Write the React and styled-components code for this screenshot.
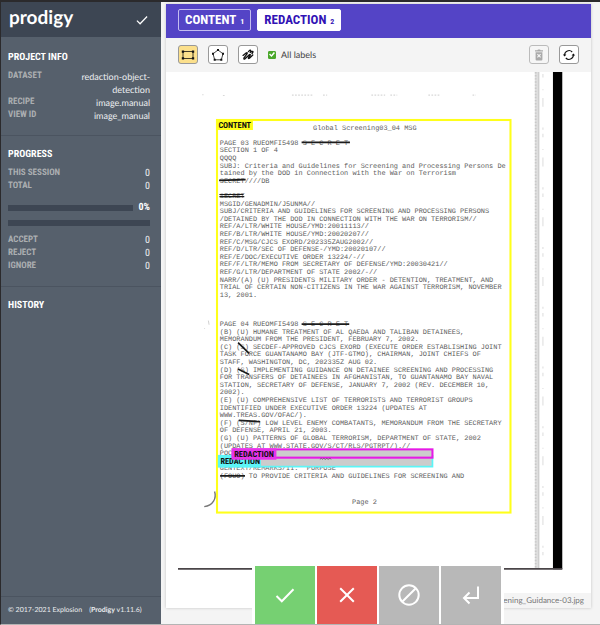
import React, { useState } from "react";
import styled, { createGlobalStyle } from "styled-components";

const condensed = `"Roboto Condensed", "Liberation Sans Narrow", Roboto, sans-serif`;
const body = `Lato, "Open Sans", sans-serif`;

const GlobalStyle = createGlobalStyle`
  *, *::before, *::after { box-sizing: border-box; }
  body {
    margin: 0;
    font-family: ${body};
    font-size: 9px;
    line-height: 13px;
    text-rendering: geometricPrecision;
    background: #f4f4f4;
  }
  button { font: inherit; cursor: pointer; padding: 0; }
`;

const Page = styled.div`
  display: flex;
  min-height: 100vh;
  border-top: 2px solid #2b2a2c;
  border-left: 1px solid #2b2a2c;
  border-bottom: 1px solid #b4b4b4;
`;

const Sidebar = styled.aside`
  flex: 0 0 160px;
  min-width: 0;
  display: flex;
  flex-direction: column;
  color: #eceef0;
  background: #56606c;
`;

const Brand = styled.header`
  display: flex;
  align-items: center;
  justify-content: space-between;
  height: 35px;
  padding: 0 13px 4px 8px;
  background: #3d4653;
`;

const Logo = styled.h1`
  margin: 0;
  font-size: 19px;
  line-height: 24px;
  font-weight: 700;
  color: #fff;
`;

const SaveButton = styled.button`
  display: flex;
  margin-top: 4px;
  border: 0;
  color: #fff;
  background: none;
`;

const Sections = styled.div`
  flex: 1;
  padding-top: 2px;
`;

const Section = styled.section`
  padding: 12px 11px 13px 7px;
  border-bottom: ${(p) => (p.$last ? "0" : "1px solid #4b5460")};
`;

const Heading = styled.h2`
  margin: 0 0 6px;
  font: 700 10px/13px ${condensed};
  color: #fff;
`;

const Facts = styled.dl`
  margin: 0;
`;

const Fact = styled.div`
  display: flex;
  justify-content: space-between;
  dt {
    font: 700 9px/13px ${condensed};
    color: #abaeb1;
  }
  dd {
    width: 80px;
    margin: 0;
    text-align: right;
    font-family: ${(p) => (p.$count ? condensed : body)};
    font-size: ${(p) => (p.$count ? "10px" : "9px")};
  }
`;

const Meter = styled.div`
  display: flex;
  align-items: center;
  gap: 6px;
  height: ${(p) => (p.$spaced ? "13px" : "6px")};
  margin: ${(p) => (p.$spaced ? "8px 0 6px" : "0 0 8px")};
  font: 700 10px/13px ${condensed};
  color: #fff;
`;

const Track = styled.div`
  flex: 1;
  height: 6px;
  background: #3d4653;
`;

const Legal = styled.footer`
  display: flex;
  gap: 7px;
  padding: 7px;
  border-top: 1px solid #4b5460;
  font-size: 7px;
  white-space: nowrap;
  a { color: inherit; text-decoration: none; }
`;

const Main = styled.main`
  position: relative;
  flex: 1;
  min-width: 0;
  padding: 2px 9px 16px 5px;
  background: #f4f4f4;
`;

const Card = styled.article`
  background: #fff;
  box-shadow: 0 0 3px rgba(0, 0, 0, 0.2);
`;

const Labels = styled.div`
  display: flex;
  gap: 6px;
  padding: 5px 12px 7px;
  background: #5444c6;
`;

const LabelButton = styled.button`
  display: flex;
  align-items: baseline;
  gap: 4px;
  height: 22px;
  padding: 0 6px;
  border: 1px solid ${(p) => (p.$active ? "#fff" : "#c4bdf0")};
  border-radius: 2px;
  font: 700 13px/20px ${condensed};
  color: ${(p) => (p.$active ? "#3213b5" : "#fff")};
  background: ${(p) => (p.$active ? "#fff" : "transparent")};
  small { font-size: 8px; }
`;

const Toolbar = styled.div`
  display: flex;
  align-items: center;
  gap: 10px;
  padding: 7px 12px 8px;
  background: #f4f4f4;
`;

const Tool = styled.button`
  display: flex;
  align-items: center;
  justify-content: center;
  width: 20px;
  height: 19px;
  border: 1px solid #999;
  border-radius: 3px;
  color: #111;
  background: ${(p) => (p.$active ? "#fce08c" : "#fff")};
  &:disabled { color: #aaa; border-color: #bbb; background: #f6f6f6; }
`;

const Toggle = styled.label`
  display: flex;
  align-items: center;
  gap: 5px;
  margin-right: auto;
  color: #444;
`;

const Tick = styled.input`
  appearance: none;
  display: grid;
  place-items: center;
  width: 8px;
  height: 8px;
  margin: 0;
  border-radius: 1px;
  border: 1px solid #4ba82c;
  background: #fff;
  &:checked { background: #4ba82c; }
  &:checked::before {
    content: "";
    width: 6px;
    height: 6px;
    background: #fff;
    clip-path: polygon(0 50%, 18% 34%, 40% 58%, 80% 10%, 100% 26%, 42% 92%);
  }
`;

const Figure = styled.figure`
  margin: 0;
  padding-left: 12px;
`;

const Scan = styled.svg`
  display: block;
  width: calc(100% - 27px);
  height: auto;
`;

const Caption = styled.figcaption`
  width: fit-content;
  margin: 23px 0 0 auto;
  padding: 1px 7px;
  font-size: 8px;
  color: #777;
  background: #f4f4f4;
`;

const Actions = styled.div`
  position: absolute;
  left: 0;
  right: 6px;
  bottom: 0;
  display: flex;
  justify-content: center;
`;

const ActionGroup = styled.div`
  display: flex;
  gap: 2px;
  padding: 0 3px;
  background: #fff;
`;

const Action = styled.button`
  display: flex;
  align-items: center;
  justify-content: center;
  width: 60px;
  height: 58px;
  border: 0;
  color: #fff;
  background: ${(p) => p.$color};
`;

const glyph = { fill: "none", stroke: "currentColor" };

const CheckIcon = ({ size = 20, weight = 2 }) => (
  <svg width={size} height={size} viewBox="0 0 20 20" {...glyph} strokeWidth={weight}>
    <path d="M1.5 11 L6.8 16.3 L18.5 4.2" />
  </svg>
);
const CrossIcon = () => (
  <svg width="20" height="20" viewBox="0 0 20 20" {...glyph} strokeWidth="2">
    <path d="M3.2 3.2 L16.8 16.8 M16.8 3.2 L3.2 16.8" />
  </svg>
);
const BanIcon = () => (
  <svg width="24" height="24" viewBox="0 0 24 24" {...glyph} strokeWidth="2">
    <circle cx="12" cy="12" r="9.7" />
    <path d="M18.8 5.2 L5.2 18.8" />
  </svg>
);
const ReturnIcon = () => (
  <svg width="20" height="20" viewBox="0 0 20 20" {...glyph} strokeWidth="2">
    <path d="M17 1.5 V13 H3 M8.5 7.5 L3 13 L8.5 18.5" />
  </svg>
);
const RectIcon = () => (
  <svg width="14" height="12" viewBox="0 0 14 12" {...glyph}>
    <path d="M2 2.5 H12 V9.5 H2 Z" strokeWidth="0.8" />
    <path d="M0.8 1.4h2.3v2.3H0.8z M10.9 1.4h2.3v2.3h-2.3z M0.8 8.3h2.3v2.3H0.8z M10.9 8.3h2.3v2.3h-2.3z" fill="currentColor" stroke="none" />
  </svg>
);
const PolyIcon = () => (
  <svg width="14" height="14" viewBox="0 0 14 14" {...glyph}>
    <path d="M7 2 L12 5.8 L10.3 11.8 H3.7 L2 5.8 Z" strokeWidth="0.8" />
    <path d="M6 1h2v2H6z M11 4.8h2v2h-2z M9.3 10.8h2v2h-2z M2.7 10.8h2v2h-2z M1 4.8h2v2H1z" fill="currentColor" stroke="none" />
  </svg>
);
const FreehandIcon = () => (
  <svg width="14" height="14" viewBox="0 0 14 14" {...glyph} strokeWidth="1.3" strokeLinecap="round" strokeLinejoin="round">
    <path d="M2 7.4 L5.4 4.8 Q6.8 4.2 6 5.8 L3 9.8 Q2.4 11.6 4 10.8 L8.6 6.6 Q9.8 6 9 7.6 L7.4 9.8 Q7.2 11 8.4 10.2 L11.8 7" />
    <path d="M7.4 3.6 L8.6 2.4 Q10 1.8 9.6 3.2 L9.2 4.4 L11 3.4 Q12.4 3 11.8 4.4 L11 5.6" />
  </svg>
);
const TrashIcon = () => (
  <svg width="12" height="12" viewBox="0 0 12 12">
    <path fill="currentColor" fillRule="evenodd" d="M2 1.2h2.4L5 .6h2l.6.6H10v1.2H2z M2.6 3.2h6.8v7.2q0 1-1 1H3.6q-1 0-1-1z M4 5.6 5.2 6.8 4 8l.8.8L6 7.6l1.2 1.2L8 8 6.8 6.8 8 5.6l-.8-.8L6 6 4.8 4.8z" />
  </svg>
);
const RefreshIcon = () => (
  <svg width="14" height="14" viewBox="0 0 14 14" {...glyph} strokeWidth="1.1">
    <path d="M2.6 7.5 V7 A4.4 4.4 0 0 1 10.2 4 M11.4 6.5 V7 A4.4 4.4 0 0 1 3.8 10" />
    <path d="M0.8 6.4 H4.4 L2.6 8.6 Z M9.6 7.6 H13.2 L11.4 5.4 Z" fill="currentColor" stroke="none" />
  </svg>
);

const firstPage = [
  "PAGE 03 RUEOMFI5498 S E C R E T",
  "SECTION 1 OF 4",
  "QQQQ",
  "SUBJ: Criteria and Guidelines for Screening and Processing Persons De",
  "tained by the DOD in Connection with the War on Terrorism",
  "SECRET////DB",
  "",
  "SECRET",
  "MSGID/GENADMIN/J5UNMA//",
  "SUBJ/CRITERIA AND GUIDELINES FOR SCREENING AND PROCESSING PERSONS",
  "/DETAINED BY THE DOD IN CONNECTION WITH THE WAR ON TERRORISM//",
  "REF/A/LTR/WHITE HOUSE/YMD:20011113//",
  "REF/B/LTR/WHITE HOUSE/YMD:20020207//",
  "REF/C/MSG/CJCS EXORD/202335ZAUG2002//",
  "REF/D/LTR/SEC OF DEFENSE-/YMD:20020107//",
  "REF/E/DOC/EXECUTIVE ORDER 13224/-//",
  "REF/F/LTR/MEMO FROM SECRETARY OF DEFENSE/YMD:20030421//",
  "REF/G/LTR/DEPARTMENT OF STATE 2002/-//",
  "NARR/(A) (U) PRESIDENTS MILITARY ORDER - DETENTION, TREATMENT, AND",
  "TRIAL OF CERTAIN NON-CITIZENS IN THE WAR AGAINST TERRORISM, NOVEMBER",
  "13, 2001.",
];

const secondPage = [
  "PAGE 04 RUEOMFI5498 S E C R E T",
  "(B) (U) HUMANE TREATMENT OF AL QAEDA AND TALIBAN DETAINEES,",
  "MEMORANDUM FROM THE PRESIDENT, FEBRUARY 7, 2002.",
  "(C) (S) SECDEF-APPROVED CJCS EXORD (EXECUTE ORDER ESTABLISHING JOINT",
  "TASK FORCE GUANTANAMO BAY (JTF-GTMO), CHAIRMAN, JOINT CHIEFS OF",
  "STAFF, WASHINGTON, DC, 202335Z AUG 02.",
  "(D) (S) IMPLEMENTING GUIDANCE ON DETAINEE SCREENING AND PROCESSING",
  "FOR TRANSFERS OF DETAINEES IN AFGHANISTAN, TO GUANTANAMO BAY NAVAL",
  "STATION, SECRETARY OF DEFENSE, JANUARY 7, 2002 (REV. DECEMBER 10,",
  "2002).",
  "(E) (U) COMPREHENSIVE LIST OF TERRORISTS AND TERRORIST GROUPS",
  "IDENTIFIED UNDER EXECUTIVE ORDER 13224 (UPDATES AT",
  "WWW.TREAS.GOV/OFAC/).",
  "(F) (S/NF) LOW LEVEL ENEMY COMBATANTS, MEMORANDUM FROM THE SECRETARY",
  "OF DEFENSE, APRIL 21, 2003.",
  "(G) (U) PATTERNS OF GLOBAL TERRORISM, DEPARTMENT OF STATE, 2002",
  "(UPDATES AT WWW.STATE.GOV/S/CT/RLS/PGTRPT/).//",
  "POC",
  "",
  "GENTEXT/REMARKS/II.  PURPOSE",
  "(FOUO) TO PROVIDE CRITERIA AND GUIDELINES FOR SCREENING AND",
];

const Typed = styled.text`
  font: 20px "Liberation Mono", monospace;
  white-space: pre;
  fill: #5c5c5c;
`;

const BoxLabel = styled.text`
  font: 700 24px ${condensed};
  fill: #111;
`;

const TypedLines = ({ lines, top }) =>
  lines.map((line, i) => (
    <Typed key={i} x="121" y={top + i * 22}>
      {line}
    </Typed>
  ));

const ScannedPage = () => (
  <Scan viewBox="0 0 1118 1442" role="img" aria-label="Scanned page">
    <path d="M1040 0V1438" stroke="#dedede" strokeWidth="13" />
    <path d="M1036 0V1438" stroke="#c8c8c8" strokeWidth="5" strokeDasharray="4 5" />
    <path d="M1045 0V1438" stroke="#bdbdbd" strokeWidth="2" />
    <path d="M1057 6V1430" stroke="#ddd" strokeWidth="3" strokeDasharray="10 34 3 22 26 60 6 12" />
    <path d="M1086 0H1113V1440H1086Z" fill="#000" />
    <path d="M0 1439H1113" stroke="#4a4548" strokeWidth="5" />
    <path d="M70 66h4m56 2h5m195-1h60m30 0h12m128 0h40m15 0h20m90 0h36m92 0h10" stroke="#d8d8d8" strokeWidth="3" strokeDasharray="5 4" />
    <Typed x="391" y="169">Global Screening03_04 MSG</Typed>
    <TypedLines lines={firstPage} top={211} />
    <TypedLines lines={secondPage} top={736} />
    <Typed x="504" y="1250">Page 2</Typed>
    <g fill="none" stroke="#1c1c1c" strokeWidth="5">
      <path d="M358 204H498 M358 730H496 M119 314L196 312" />
      <path d="M120 361H192 M120 355H190" strokeWidth="3" />
      <path d="M174 784L206 815 M174 860L206 876 M176 1009L238 1013 M122 1170H194" />
      <path d="M106 1215C112 1234 102 1256 76 1259" stroke="#777" strokeWidth="4" />
      <path d="M88 720L90 732 M76 742L78 744" stroke="#bbb" strokeWidth="2" />
    </g>
    <rect x="113" y="139" width="850" height="1137" fill="none" stroke="#ffff1a" strokeWidth="6" />
    <rect x="110" y="138" width="107" height="30" fill="#ffff1a" />
    <BoxLabel x="117" y="162">CONTENT</BoxLabel>
    <rect x="118" y="1112" width="619" height="31" fill="#ccc" stroke="#5cf5f7" strokeWidth="5" />
    <rect x="116" y="1109" width="124" height="36" fill="#5cf5f7" />
    <BoxLabel x="123" y="1136">REDACTION</BoxLabel>
    <rect x="158" y="1093" width="579" height="24" fill="#ccc" stroke="#e61ae6" strokeWidth="6" />
    <rect x="156" y="1090" width="129" height="33" fill="#e833ea" />
    <BoxLabel x="163" y="1116">REDACTION</BoxLabel>
    <path d="M411 1122l4-3 3 3 4-3 5 3 4-3 4 3 5-3 4 3" fill="none" stroke="#555" strokeWidth="2" />
  </Scan>
);

const info = [
  ["Dataset", "redaction-object-detection"],
  ["Recipe", "image.manual"],
  ["View ID", "image_manual"],
];

const FactList = ({ items, count }) => (
  <Facts>
    {items.map(([name, value]) => (
      <Fact key={name} $count={count}>
        <dt>{name.toUpperCase()}</dt>
        <dd>{value}</dd>
      </Fact>
    ))}
  </Facts>
);

export default function App() {
  const [label, setLabel] = useState("REDACTION");
  const [tool, setTool] = useState("Rectangle");
  const tools = [["Rectangle", RectIcon], ["Polygon", PolyIcon], ["Freehand", FreehandIcon]];
  return (
    <Page>
      <GlobalStyle />
      <Sidebar>
        <Brand>
          <Logo>prodigy</Logo>
          <SaveButton aria-label="Save"><CheckIcon size={12} weight={2} /></SaveButton>
        </Brand>
        <Sections>
          <Section>
            <Heading>PROJECT INFO</Heading>
            <FactList items={info} />
          </Section>
          <Section>
            <Heading>PROGRESS</Heading>
            <FactList count items={[["This session", 0], ["Total", 0]]} />
            <Meter $spaced><Track />0%</Meter>
            <Meter><Track /></Meter>
            <FactList count items={[["Accept", 0], ["Reject", 0], ["Ignore", 0]]} />
          </Section>
          <Section $last>
            <Heading>HISTORY</Heading>
          </Section>
        </Sections>
        <Legal>
          <a href="#explosion">© 2017-2021 Explosion</a>
          <span>(<b>Prodigy</b> v1.11.6)</span>
        </Legal>
      </Sidebar>
      <Main>
        <Card>
          <Labels>
            {["CONTENT", "REDACTION"].map((name, i) => (
              <LabelButton key={name} $active={label === name} aria-pressed={label === name} onClick={() => setLabel(name)}>
                {name}<small>{i + 1}</small>
              </LabelButton>
            ))}
          </Labels>
          <Toolbar>
            {tools.map(([name, Icon]) => (
              <Tool key={name} aria-label={name} $active={tool === name} onClick={() => setTool(name)}><Icon /></Tool>
            ))}
            <Toggle><Tick type="checkbox" defaultChecked />All labels</Toggle>
            <Tool disabled aria-label="Delete"><TrashIcon /></Tool>
            <Tool aria-label="Reset"><RefreshIcon /></Tool>
          </Toolbar>
          <Figure>
            <ScannedPage />
            <Caption>Screening_Guidance-03.jpg</Caption>
          </Figure>
        </Card>
        <Actions>
          <ActionGroup>
            <Action aria-label="Accept" $color="#76d072"><CheckIcon /></Action>
            <Action aria-label="Reject" $color="#e55a54"><CrossIcon /></Action>
            <Action aria-label="Ignore" $color="#b8b8b8"><BanIcon /></Action>
            <Action aria-label="Undo" $color="#b8b8b8"><ReturnIcon /></Action>
          </ActionGroup>
        </Actions>
      </Main>
    </Page>
  );
}
